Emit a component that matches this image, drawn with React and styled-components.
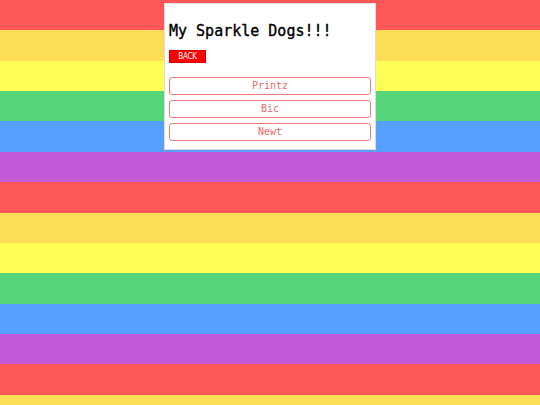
import styled, { createGlobalStyle } from "styled-components";

const GlobalStyle = createGlobalStyle`
  html, body {
    margin: 0;
    padding: 0;
    min-height: 100vh;
  }
  body {
    font-family: "DejaVu Sans Mono", monospace;
    background: repeating-linear-gradient(
      to bottom,
      #ff5757 0, #ff5757 7.5vh,
      #ffde57 7.5vh, #ffde57 15vh,
      #ffff57 15vh, #ffff57 22.5vh,
      #57d57a 22.5vh, #57d57a 30vh,
      #57a0ff 30vh, #57a0ff 37.5vh,
      #c25ad8 37.5vh, #c25ad8 45vh
    );
  }
`;

const Page = styled.div`
  display: flex;
  justify-content: center;
  padding-top: 3px;
`;

const Card = styled.div`
  width: 202px;
  background: #fff;
  border: 1px solid #dcdcdc;
  padding: 4px 4px 8px;
  display: flex;
  flex-direction: column;
`;

const Title = styled.h1`
  margin: 14px 0 10px;
  font-size: 15px;
  line-height: 18px;
  font-weight: normal;
  -webkit-text-stroke: 0.35px #000;
  color: #000;
`;

const BackButton = styled.button`
  align-self: flex-start;
  width: 37px;
  height: 13px;
  padding: 0;
  margin-bottom: 14px;
  background: #ff0000;
  border: 1px solid #d40000;
  color: #fff;
  font-family: "DejaVu Sans Condensed", "DejaVu Sans", sans-serif;
  font-size: 8px;
  line-height: 11px;
  letter-spacing: -0.3px;
  text-transform: uppercase;
`;

const DogList = styled.div`
  display: flex;
  flex-direction: column;
  gap: 5px;
`;

const DogButton = styled.button`
  height: 18px;
  padding: 0;
  background: #fff;
  border: 1.5px solid #f07a7a;
  border-radius: 3px;
  color: #e86a6a;
  font-family: "DejaVu Sans Mono", monospace;
  font-size: 10px;
  line-height: 14px;
`;

const dogs = ["Printz", "Bic", "Newt"];

export default function App() {
  return (
    <>
      <GlobalStyle />
      <Page>
        <Card>
          <Title>My Sparkle Dogs!!!</Title>
          <BackButton>Back</BackButton>
          <DogList>
            {dogs.map((dog) => (
              <DogButton key={dog}>{dog}</DogButton>
            ))}
          </DogList>
        </Card>
      </Page>
    </>
  );
}
